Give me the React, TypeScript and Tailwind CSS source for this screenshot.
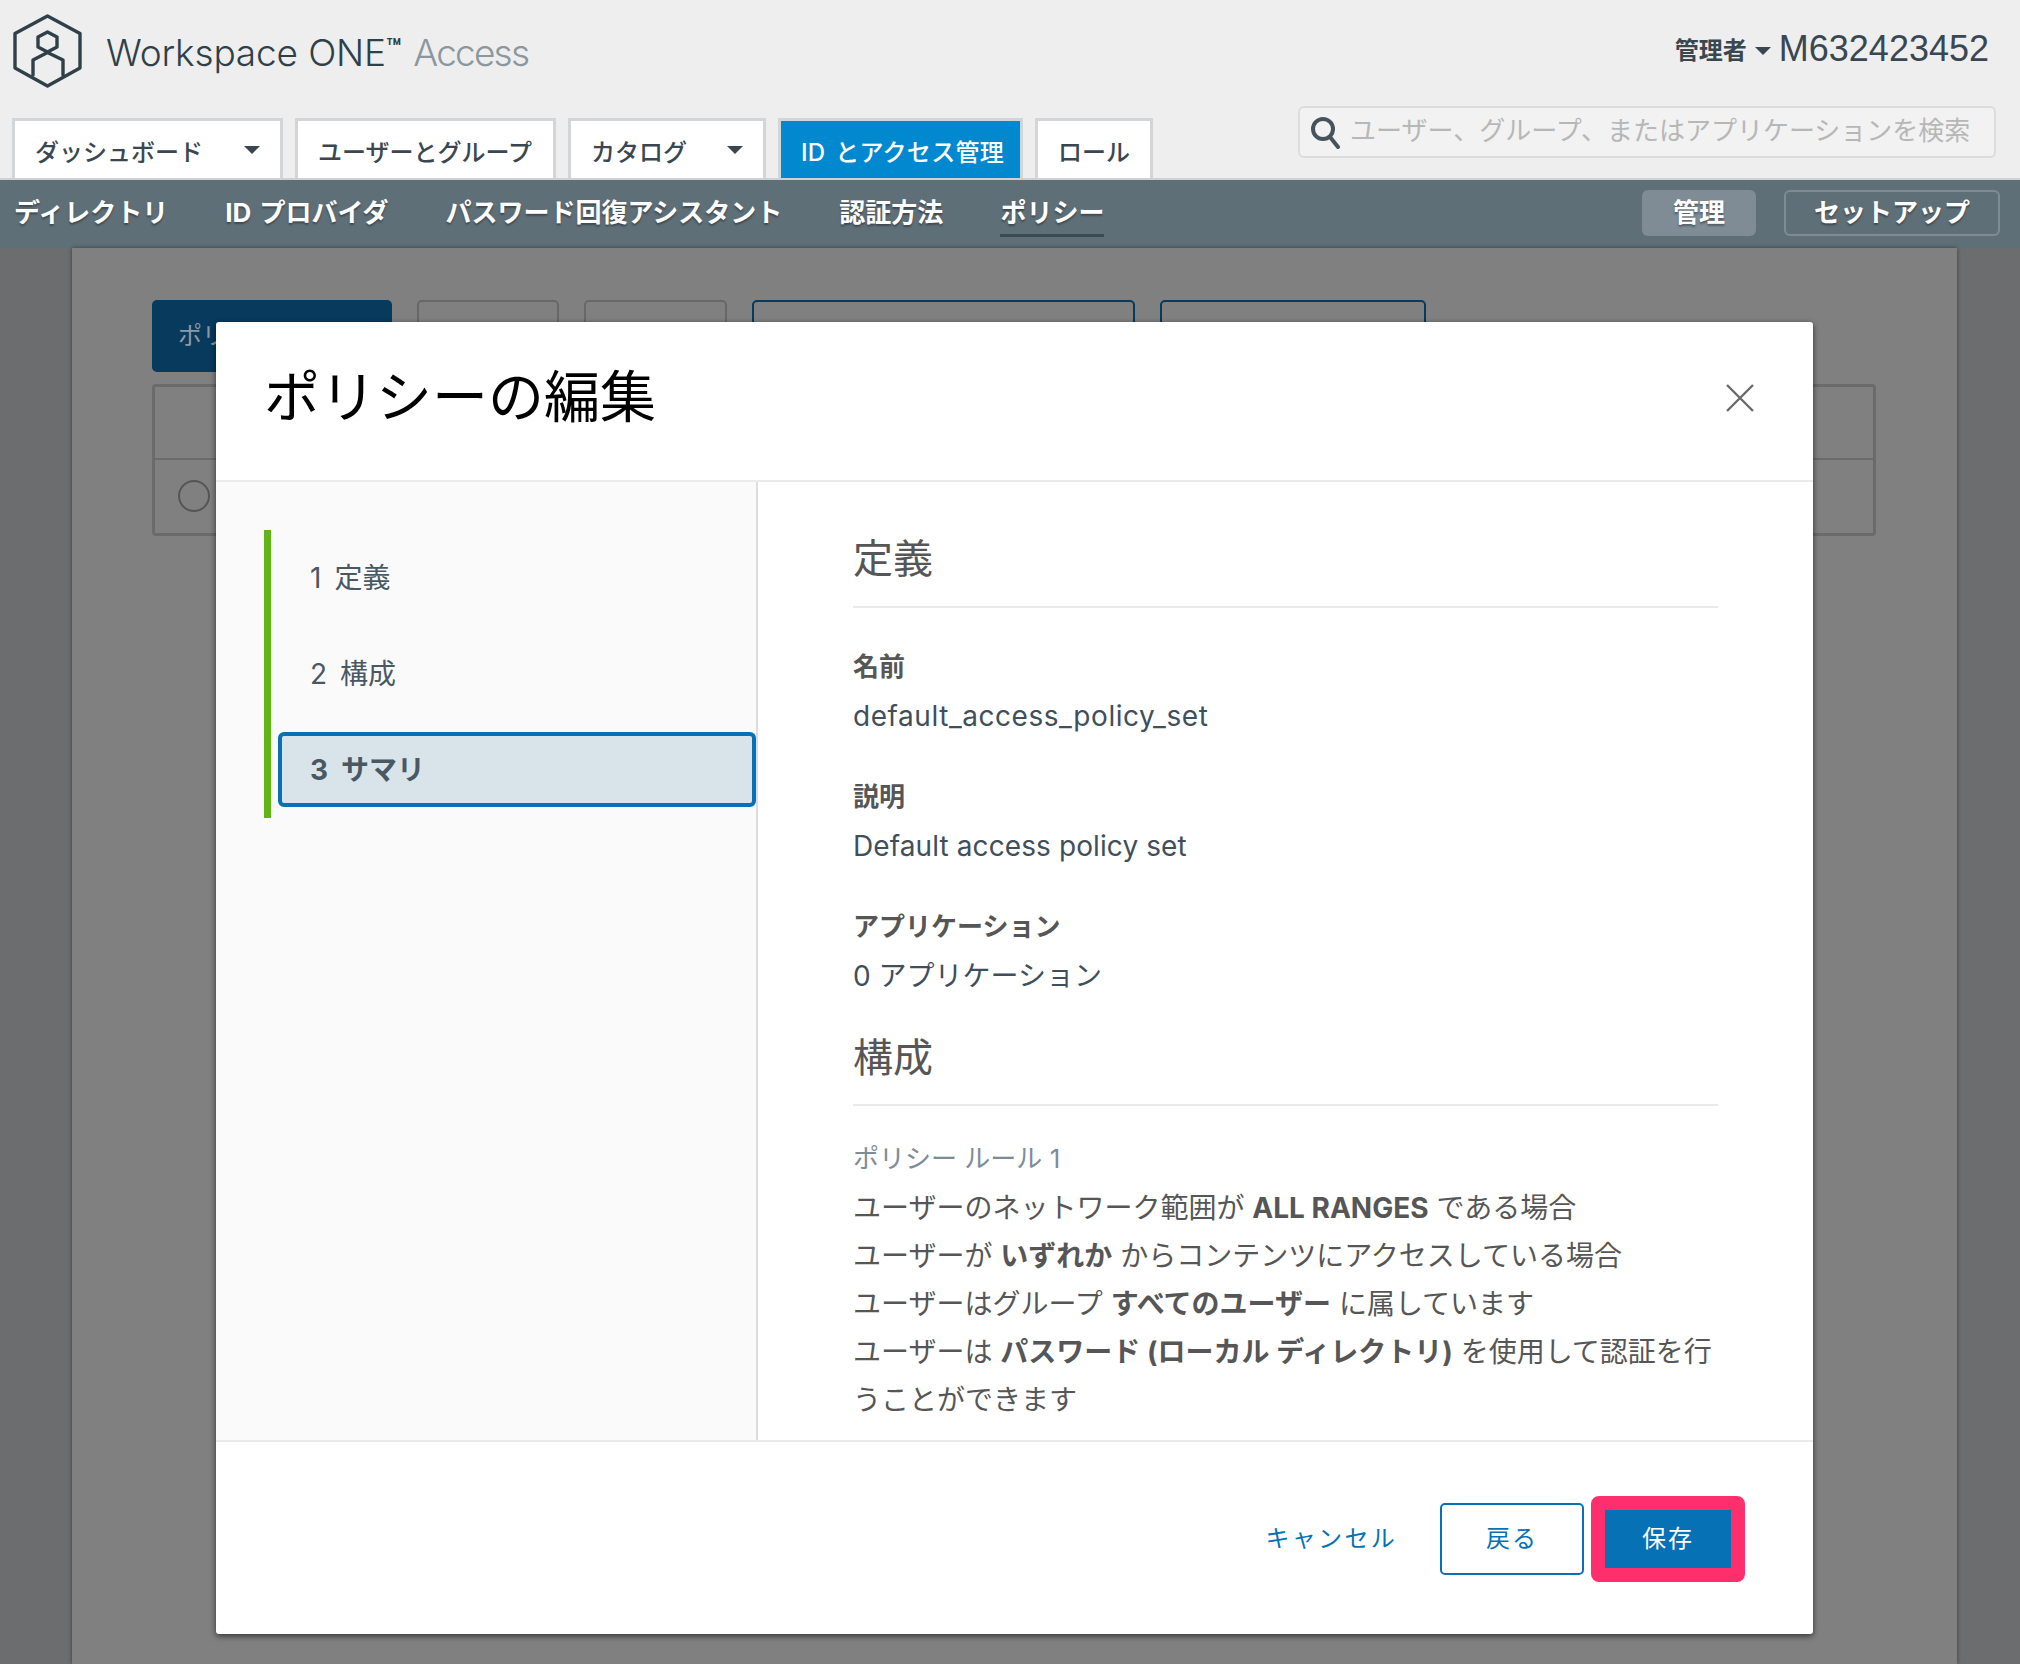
const TABS = [
  { label: 'ダッシュボード', w: 'w-[271px]', caret: true },
  { label: 'ユーザーとグループ', w: 'w-[261px]' },
  { label: 'カタログ', w: 'w-[198px]', caret: true },
  { label: 'ID とアクセス管理', w: 'w-[245px]', active: true },
  { label: 'ロール', w: 'w-[118px]' },
];

const SUBNAV = ['ディレクトリ', 'ID プロバイダ', 'パスワード回復アシスタント', '認証方法'];

const STEPS = [
  { n: '1', label: '定義' },
  { n: '2', label: '構成' },
];

function Caret({ className }: { className: string }) {
  return <span className={`block w-0 h-0 border-x-[8px] border-x-transparent border-t-[8px] ${className}`} />;
}

function Logo() {
  return (
    <svg width="70" height="74" viewBox="0 0 70 74" fill="none" stroke="#2f4049" strokeWidth="3.4" strokeLinejoin="round" strokeLinecap="round" className="shrink-0">
      <path d="M34.5 2 L67 19.5 V54 L34.5 72 L2 54 V19.5 Z" />
      <path d="M34.5 18 L44 23 V33 L34.5 38 L25 33 V23 Z" />
      <path d="M20 61 V46 L34.5 38.5 L50 46 V61" />
    </svg>
  );
}

function Field({ label, value, labelClass, valueClass }: { label: string; value: string; labelClass: string; valueClass: string }) {
  return (
    <>
      <div className={`${labelClass} text-[26px] font-bold leading-[48px] text-[#565656]`}>{label}</div>
      <div className={`${valueClass} text-[28px] leading-[48px] text-[#3f4f5b]`}>{value}</div>
    </>
  );
}

export default function App() {
  return (
    <div className="relative flex flex-col w-[2020px] h-[1664px] overflow-hidden bg-[#6c6d6f] font-['Inter','Noto_Sans_CJK_JP',sans-serif]">
      {/* Header */}
      <header className="flex flex-col h-[180px] bg-[#eeeeee] border-b-2 border-[#cfd2d4]">
        <div className="flex justify-between h-[106px]">
          <div className="flex items-start pl-[13px] pt-[14px]">
            <Logo />
            <div className="ml-[23px] mt-[14px] text-[37px] leading-[50px] font-light tracking-[-0.15px] text-[#2f4049] whitespace-nowrap">
              Workspace ONE<sup className="text-[24px] font-bold -top-[10px] tracking-[-1px]">™</sup>
              <span className="ml-[13px] tracking-[-1.8px] text-[#8b979e]">Access</span>
            </div>
          </div>
          <div className="flex items-center h-[98px] pr-[31px] text-[#3a4750]">
            <span className="text-[24px] font-bold mt-[3px]">管理者</span>
            <Caret className="ml-[8px] mt-[4px] border-t-[#3a4750]" />
            <span className="ml-[8px] text-[36px] font-['Liberation_Sans',sans-serif]">M632423452</span>
          </div>
        </div>
        <div className="flex justify-between h-[72px] pl-[12px] pr-[24px]">
          <div className="flex items-end gap-[12px]">
            {TABS.map(tab => (
              <div
                key={tab.label}
                className={`flex items-center justify-between h-[60px] px-[20px] pt-[7px] border-[3px] border-b-0 text-[24px] font-medium whitespace-nowrap [word-spacing:3px] ${tab.w} ${
                  tab.active ? 'bg-[#0288cf] border-[#d3d6d8] text-white font-bold tracking-[0.3px]' : 'bg-white border-[#d3d6d8] text-[#3a4750]'
                }`}
              >
                <span>{tab.label}</span>
                {tab.caret && <Caret className="-mt-[6px] border-t-[#3a4750]" />}
              </div>
            ))}
          </div>
          <div className="flex items-center w-[698px] h-[52px] pl-[9px] bg-[#f2f2f2] border-2 border-[#dcdcdc] rounded-[6px]">
            <svg width="34" height="34" viewBox="0 0 34 34" fill="none" stroke="#46535c" strokeWidth="4" strokeLinecap="round" className="shrink-0">
              <circle cx="14" cy="14" r="10" />
              <path d="M21 22 L29 32" />
            </svg>
            <span className="ml-[7px] -mt-[4px] text-[26px] text-[#b7b7b7] whitespace-nowrap">ユーザー、グループ、またはアプリケーションを検索</span>
          </div>
        </div>
      </header>

      {/* Sub navigation */}
      <nav className="flex items-center justify-between h-[68px] pb-[2px] pl-[14px] pr-[20px] bg-[#5f6f78]">
        <div className="flex items-center gap-[57px] pb-[2px] text-[26px] font-bold text-white [word-spacing:2px] [text-shadow:0_2px_2px_rgba(0,0,0,0.35)]">
          {SUBNAV.map(item => (
            <span key={item} className="whitespace-nowrap">{item}</span>
          ))}
          <span className="whitespace-nowrap border-b-[3px] border-[#3e4a52] pb-[2px] -mb-[5px]">ポリシー</span>
        </div>
        <div className="flex items-center gap-[28px] text-[26px] font-bold text-white [text-shadow:0_2px_2px_rgba(0,0,0,0.35)]">
          <div className="flex items-center justify-center w-[114px] h-[46px] pb-[2px] rounded-[6px] bg-[#7f8c95]">管理</div>
          <div className="flex items-center justify-center w-[216px] h-[46px] pb-[2px] rounded-[6px] border-2 border-[#7f8c95]">セットアップ</div>
        </div>
      </nav>

      {/* Dimmed page behind the dialog */}
      <main className="flex-1 ml-[72px] w-[1885px] pl-[80px] pt-[52px] bg-[#808080] shadow-[0_0_4px_rgba(0,0,0,0.45)]">
        <div className="flex gap-[25px] h-[72px]">
          <div className="flex items-center w-[240px] pl-[26px] bg-[#073a5c] rounded-[5px] text-[24px] text-[#8d9aa3]">ポリシー</div>
          <div className="w-[142px] border-2 border-[#686868] rounded-[5px]" />
          <div className="w-[143px] border-2 border-[#686868] rounded-[5px]" />
          <div className="w-[383px] border-2 border-[#073a5c] rounded-[5px]" />
          <div className="w-[266px] border-2 border-[#073a5c] rounded-[5px]" />
        </div>
        <div className="mt-[12px] w-[1724px] h-[152px] border-[3px] border-[#6b6b6b] rounded-[4px]">
          <div className="h-[73px] border-b-2 border-[#6b6b6b]" />
          <div className="flex items-center h-[72px] pl-[23px]">
            <span className="block w-[32px] h-[32px] rounded-full border-2 border-[#555555]" />
          </div>
        </div>
      </main>

      {/* Dialog */}
      <div className="absolute left-[216px] top-[322px] flex flex-col w-[1597px] h-[1312px] bg-white rounded-[3px] shadow-[0_2px_6px_rgba(0,0,0,0.6)]">
        <div className="flex items-center justify-between h-[160px] pl-[48px] pr-[59px] border-b-2 border-[#ebebeb]">
          <h1 className="text-[56px] leading-[76px] -mt-[9px] text-black">ポリシーの編集</h1>
          <svg width="28" height="28" viewBox="0 0 28 28" stroke="#6b6b6b" strokeWidth="2.4" className="-mt-[6px]">
            <path d="M1 1 L27 27 M27 1 L1 27" />
          </svg>
        </div>

        <div className="flex h-[958px]">
          <aside className="w-[542px] pl-[48px] pt-[48px] bg-[#fafafa] border-r-2 border-[#dddddd]">
            <div className="border-l-[7px] border-[#60b515] h-[288px]">
              {STEPS.map(step => (
                <div key={step.n} className="flex items-center h-[96px] pl-[39px] text-[28px] text-[#4a5864]">
                  <span className="mr-[13px]">{step.n}</span>
                  {step.label}
                </div>
              ))}
              <div className="flex items-center h-[75px] mt-[10px] ml-[7px] pl-[28px] bg-[#d9e4ea] border-[4px] border-[#0672b5] rounded-[6px] text-[28px] font-bold text-[#4a5864]">
                <span className="mr-[13px]">3</span>
                サマリ
              </div>
            </div>
          </aside>

          <section className="flex-1 pl-[95px] pr-[95px] overflow-hidden">
            <h2 className="mt-[47px] pb-[17px] text-[40px] leading-[60px] text-[#565656] border-b-2 border-[#ebebeb]">定義</h2>
            <Field label="名前" value="default_access_policy_set" labelClass="mt-[35px]" valueClass="mt-[1px] tracking-[0.55px]" />
            <Field label="説明" value="Default access policy set" labelClass="mt-[33px]" valueClass="mt-[1px] tracking-[0.1px]" />
            <Field label="アプリケーション" value="0 アプリケーション" labelClass="mt-[33px]" valueClass="mt-[1px]" />
            <h2 className="mt-[28px] pb-[16px] text-[40px] leading-[60px] text-[#565656] border-b-2 border-[#ebebeb]">構成</h2>
            <div className="mt-[29px] text-[26px] leading-[48px] text-[#7d8c99]">ポリシー ルール 1</div>
            <div className="mt-[1px] text-[28px] leading-[48px] text-[#565656] whitespace-nowrap">
              <p>ユーザーのネットワーク範囲が <b>ALL RANGES</b> である場合</p>
              <p>ユーザーが <b>いずれか</b> からコンテンツにアクセスしている場合</p>
              <p>ユーザーはグループ <b>すべてのユーザー</b> に属しています</p>
              <p>ユーザーは <b>パスワード (ローカル ディレクトリ)</b> を使用して認証を行</p>
              <p>うことができます</p>
            </div>
          </section>
        </div>

        <div className="flex flex-1 items-center justify-end pt-[2px] pr-[68px] border-t-2 border-[#ebebeb] text-[24px] tracking-[2px]">
          <span className="mr-[43px] tracking-[2.3px] text-[#0672b5]">キャンセル</span>
          <div className="flex items-center justify-center w-[144px] h-[72px] mr-[7px] border-2 border-[#0672b5] rounded-[5px] text-[#0672b5]">戻る</div>
          <div className="flex items-center justify-center w-[154px] h-[86px] bg-[#0672b5] border-[14px] border-[#ff2f6e] rounded-[8px] text-white">保存</div>
        </div>
      </div>
    </div>
  );
}
